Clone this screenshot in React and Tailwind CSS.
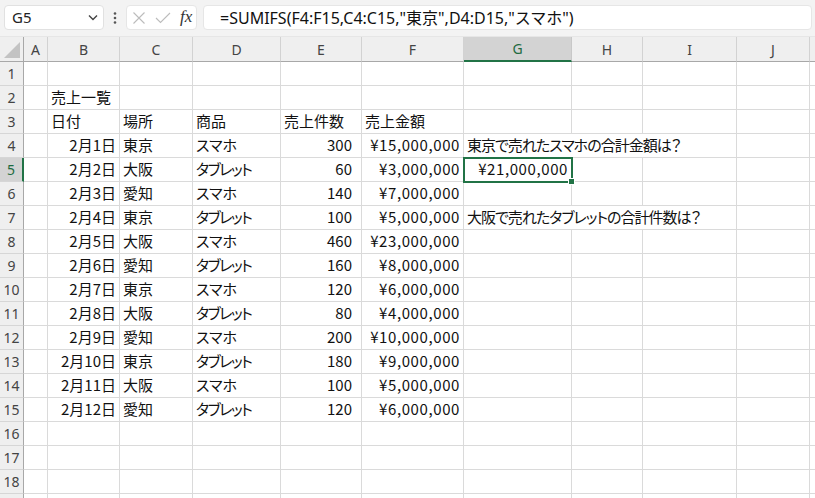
import clsx from "clsx";

const cols = [
  { l: "A", w: "w-[24px]", pr: "pr-[3px]" },
  { l: "B", w: "w-[72px]", pr: "pr-[3px]" },
  { l: "C", w: "w-[73px]", pr: "pr-[3px]" },
  { l: "D", w: "w-[88px]", pr: "pr-[3px]" },
  { l: "E", w: "w-[81px]", pr: "pr-[9px]" },
  { l: "F", w: "w-[102px]", pr: "pr-[3px]" },
  { l: "G", w: "w-[108px]", pr: "pr-[3px]" },
  { l: "H", w: "w-[71px]", pr: "pr-[3px]" },
  { l: "I", w: "w-[94px]", pr: "pr-[3px]" },
  { l: "J", w: "w-[73px]", pr: "pr-[3px]" },
  { l: "", w: "w-[60px]", pr: "pr-[3px]" },
];

const sales = [
  ["2月1日", "東京", "スマホ", "300", "¥15,000,000"],
  ["2月2日", "大阪", "タブレット", "60", "¥3,000,000"],
  ["2月3日", "愛知", "スマホ", "140", "¥7,000,000"],
  ["2月4日", "東京", "タブレット", "100", "¥5,000,000"],
  ["2月5日", "大阪", "スマホ", "460", "¥23,000,000"],
  ["2月6日", "愛知", "タブレット", "160", "¥8,000,000"],
  ["2月7日", "東京", "スマホ", "120", "¥6,000,000"],
  ["2月8日", "大阪", "タブレット", "80", "¥4,000,000"],
  ["2月9日", "愛知", "スマホ", "200", "¥10,000,000"],
  ["2月10日", "東京", "タブレット", "180", "¥9,000,000"],
  ["2月11日", "大阪", "スマホ", "100", "¥5,000,000"],
  ["2月12日", "愛知", "タブレット", "120", "¥6,000,000"],
];

// build cell specs for rows 1..19
const buildRows = () => {
  const rows = [];
  for (let r = 1; r <= 19; r++) {
    const cells = cols.map(() => ({ t: "" }));
    if (r === 2) cells[1].t = "売上一覧";
    if (r === 3) {
      ["日付", "場所", "商品", "売上件数", "売上金額"].forEach((t, i) => (cells[i + 1].t = t));
    }
    if (r >= 4 && r <= 15) {
      const d = sales[r - 4];
      cells[1] = { t: d[0], right: true };
      cells[2] = { t: d[1] };
      cells[3] = { t: d[2], tight: d[2] === "タブレット" };
      cells[4] = { t: d[3], right: true };
      cells[5] = { t: d[4], right: true, money: true };
    }
    if (r === 4) {
      cells[6] = { t: "東京で売れたスマホの合計金額は？", hideR: true, note: true };
      cells[7] = { t: "", hideR: true };
    }
    if (r === 5) cells[6] = { t: "¥21,000,000", right: true, money: true };
    if (r === 7) {
      cells[6] = { t: "大阪で売れたタブレットの合計件数は？", hideR: true, note: true };
      cells[7] = { t: "", hideR: true };
    }
    rows.push(cells);
  }
  return rows;
};

const FormulaBar = () => (
  <div className="h-[37px] bg-[#f3f3f3] flex items-start pt-[5px] border-b border-[#e6e6e6]">
    <div className="ml-[4px] w-[100px] h-[25px] bg-white rounded-[4px] border border-[#e1e1e1] flex items-center justify-between pl-[7px] pr-[5px] text-[15px] text-[#222] font-['Noto_Sans',sans-serif]">
      <span>G5</span>
      <svg width="10" height="7" viewBox="0 0 10 7">
        <polyline points="1,1.5 5,5.5 9,1.5" fill="none" stroke="#444" strokeWidth="1.4" />
      </svg>
    </div>
    <div className="w-[22px] h-[25px] flex items-center justify-center">
      <svg width="4" height="14" viewBox="0 0 4 14">
        <circle cx="2" cy="2.5" r="1.3" fill="#555" />
        <circle cx="2" cy="7" r="1.3" fill="#555" />
        <circle cx="2" cy="11.5" r="1.3" fill="#555" />
      </svg>
    </div>
    <div className="w-[71px] h-[25px] bg-white rounded-[4px] border border-[#e6e6e6] flex items-center pl-[5px] gap-[9px]">
      <svg width="14" height="14" viewBox="0 0 14 14">
        <path d="M1.5 1.5 L12.5 12.5 M12.5 1.5 L1.5 12.5" stroke="#bcbcbc" strokeWidth="1.1" fill="none" />
      </svg>
      <svg width="16" height="12" viewBox="0 0 16 12">
        <polyline points="1,6 5.5,10.5 15,1" stroke="#bcbcbc" strokeWidth="1.1" fill="none" />
      </svg>
      <span className="italic text-[17px] leading-none text-[#333] font-['Liberation_Serif',serif] -mt-[2px]">fx</span>
    </div>
    <div className="ml-[6px] flex-1 mr-[3px] h-[25px] bg-white rounded-[4px] border border-[#e6e6e6] flex items-center pl-[16px] text-[16px] text-[#111] whitespace-nowrap font-['Noto_Sans','Noto_Sans_CJK_JP',sans-serif]">
      =SUMIFS(F4:F15,C4:C15,"東京",D4:D15,"スマホ")
    </div>
  </div>
);

const HeaderRow = () => (
  <div className="flex h-[25px] bg-[#efefef] font-['Noto_Sans',sans-serif] text-[14px] text-[#444]">
    <div className="w-[24px] shrink-0 border-r border-b border-[#a8a8a8] flex items-end justify-end pr-[3px] pb-[3px]">
      <svg width="16" height="16" viewBox="0 0 16 16">
        <polygon points="16,0 16,16 0,16" fill="#c3c3c3" />
      </svg>
    </div>
    {cols.map((c, i) =>
      c.l === "G" ? (
        <div
          key={i}
          className={clsx(c.w, "shrink-0 bg-[#d3d3d3] text-[#1e6b41] border-r border-[#c8c8c8] border-b-2 border-b-[#217346] flex items-center justify-center")}
        >
          {c.l}
        </div>
      ) : (
        <div
          key={i}
          className={clsx(c.w, "shrink-0 border-r border-[#d2d2d2] border-b border-b-[#a8a8a8] flex items-center justify-center")}
        >
          {c.l}
        </div>
      )
    )}
  </div>
);

export default function App() {
  const rows = buildRows();
  return (
    <div className="relative w-[815px] h-[498px] overflow-hidden bg-white">
      <FormulaBar />
      <HeaderRow />
      <div className="text-[15px] text-[#111] font-['Noto_Sans_CJK_JP',sans-serif] [font-feature-settings:'palt']">
        {rows.map((cells, i) => {
          const r = i + 1;
          const sel = r === 5;
          return (
            <div key={r} className="flex h-[24px]">
              <div
                className={clsx(
                  "w-[24px] shrink-0 flex items-center justify-center text-[14px] font-['Noto_Sans',sans-serif] border-b border-[#d6d6d6]",
                  sel
                    ? "bg-[#d3d3d3] text-[#1e6b41] border-r-2 border-r-[#217346]"
                    : "bg-[#efefef] text-[#444] border-r border-r-[#a8a8a8]"
                )}
              >
                {r < 19 ? r : ""}
              </div>
              {cells.map((c, j) => (
                <div
                  key={j}
                  className={clsx(
                    cols[j].w,
                    "shrink-0 flex items-center whitespace-nowrap border-b border-[#dadada]",
                    !c.hideR && "border-r",
                    c.note && "tracking-[-1px]",
                    c.tight && "tracking-[-1.5px]",
                    c.money && "tracking-[0.6px]",
                    c.right ? clsx("justify-end", cols[j].pr) : "justify-start pl-[3px]"
                  )}
                >
                  {c.t}
                </div>
              ))}
            </div>
          );
        })}
      </div>
      {/* active cell G5 */}
      <div className="absolute left-[463px] top-[157px] w-[110px] h-[26px] border-2 border-[#217346]" />
      <div className="absolute left-[568px] top-[178px] w-[7px] h-[7px] bg-[#217346] border border-white" />
    </div>
  );
}
